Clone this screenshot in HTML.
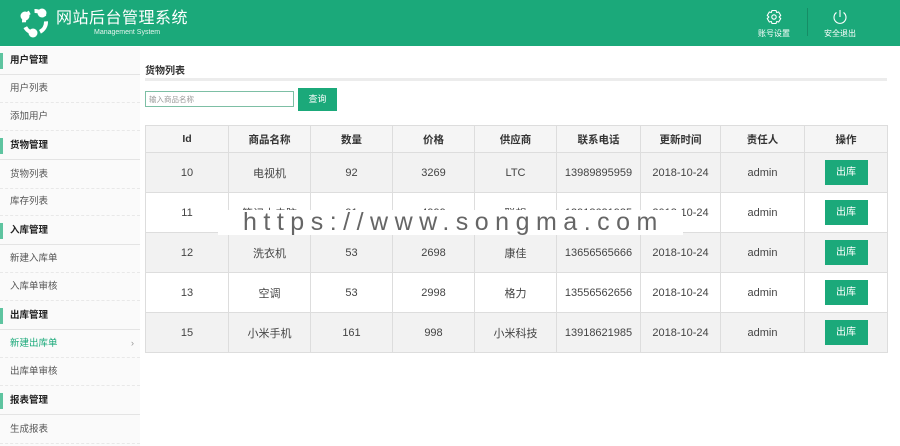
<!DOCTYPE html>
<html><head><meta charset="utf-8"><style>
*{margin:0;padding:0;box-sizing:border-box}
body{width:900px;height:446px;overflow:hidden;background:#fff;font-family:"Liberation Sans","Noto Sans CJK SC",sans-serif;position:relative;color:#333}
.hd{position:absolute;left:0;top:0;width:900px;height:46px;background:#1ba97a}
.t1{position:absolute;left:56px;top:8px;color:#fff;font-size:16px;line-height:22px;letter-spacing:0.5px}
.t2{position:absolute;left:94px;top:29px;color:#e6f5ef;font-size:7px;line-height:8px}
.hb{position:absolute;top:9px;color:#fff;font-size:8px;text-align:center;width:50px}
.sep{position:absolute;left:807px;top:8px;width:1px;height:28px;background:#168d66}
.sb{position:absolute;left:0;top:47px;width:140px;height:399px;background:#fafafa}
.it{position:absolute;left:0;width:140px;height:28px;line-height:28px;font-size:9.5px;padding-left:10px;color:#555;border-bottom:1px dashed #e8e8e8}
.it.h{font-weight:bold;color:#222;border-bottom:1px solid #e4e4e4}
.it.h:before{content:"";position:absolute;left:0;top:6px;width:3px;height:16px;background:#5ec4a0}
.ttl{position:absolute;left:145px;top:62px;font-size:10px;font-weight:bold;color:#333}
.ln{position:absolute;left:145px;top:78px;width:742px;height:3px;background:#ececec}
.inp{position:absolute;left:145px;top:91px;width:149px;height:16px;border:1px solid #7dbfa5;font-size:7.5px;color:#999;padding:3px 3px;line-height:9px}
.btn{position:absolute;left:298px;top:88px;width:39px;height:23px;background:#1ba97a;color:#fff;font-size:9px;text-align:center;line-height:23px}
table{position:absolute;left:145px;top:125px;border-collapse:collapse;font-size:11px;width:743px}
td,th{border:1px solid #ddd;text-align:center;color:#444;font-weight:normal}
th{height:27px;background:#f5f5f5;font-weight:bold;color:#333;font-size:10.5px}
td{height:40px}
tr.g td{background:#f2f2f2}
.ob{display:inline-block;width:43px;height:25px;line-height:25px;background:#1ba97a;color:#fff;font-size:10px}
.wm{position:absolute;left:218px;top:210px;width:465px;height:25px;background:#fff;color:#666;font-size:25px;letter-spacing:6.5px;line-height:25px;padding-left:25px;white-space:nowrap;overflow:hidden}
</style></head><body>
<div class="hd">
<svg style="position:absolute;left:18px;top:6px" width="36" height="34" viewBox="0 0 36 34"><circle cx="17" cy="16" r="11" fill="none" stroke="#fff" stroke-width="4" stroke-dasharray="12 5"/><circle cx="7" cy="10" r="4.5" fill="#fff"/><circle cx="24" cy="7" r="4.5" fill="#fff"/><circle cx="15" cy="27" r="4.5" fill="#fff"/></svg>
<div class="t1">网站后台管理系统</div><div class="t2">Management System</div>
<div class="hb" style="left:749px"><svg width="16" height="16" viewBox="0 0 16 16"><path d="M6 1.5h4l.7 2 2-.5 2 3.4-1.5 1.6 1.5 1.6-2 3.4-2-.5-.7 2H6l-.7-2-2 .5-2-3.4L2.8 8 1.3 6.4l2-3.4 2 .5z" fill="none" stroke="#fff" stroke-width="1.1"/><circle cx="8" cy="8" r="2.2" fill="none" stroke="#fff" stroke-width="1.1"/></svg><div style="margin-top:1px">账号设置</div></div>
<div class="sep"></div>
<div class="hb" style="left:815px"><svg width="16" height="16" viewBox="0 0 16 16"><path d="M4.5 3.5a6 6 0 1 0 7 0" fill="none" stroke="#fff" stroke-width="1.1"/><path d="M8 1v7" stroke="#fff" stroke-width="1.1"/></svg><div style="margin-top:1px">安全退出</div></div>
</div>
<div class="sb">
<div class="it h" style="top:0">用户管理</div>
<div class="it" style="top:28px">用户列表</div>
<div class="it" style="top:56px">添加用户</div>
<div class="it h" style="top:85px">货物管理</div>
<div class="it" style="top:114px">货物列表</div>
<div class="it" style="top:141px">库存列表</div>
<div class="it h" style="top:170px">入库管理</div>
<div class="it" style="top:198px">新建入库单</div>
<div class="it" style="top:226px">入库单审核</div>
<div class="it h" style="top:255px">出库管理</div>
<div class="it" style="top:283px;color:#1ba97a">新建出库单<span style="position:absolute;right:6px;color:#999">›</span></div>
<div class="it" style="top:311px">出库单审核</div>
<div class="it h" style="top:340px">报表管理</div>
<div class="it" style="top:369px">生成报表</div>
</div>
<div class="ttl">货物列表</div><div class="ln"></div>
<div class="inp">输入商品名称</div><div class="btn">查询</div>
<table>
<tr><th style="width:83px">Id</th><th style="width:82px">商品名称</th><th style="width:82px">数量</th><th style="width:82px">价格</th><th style="width:82px">供应商</th><th style="width:84px">联系电话</th><th style="width:80px">更新时间</th><th style="width:84px">责任人</th><th>操作</th></tr>
<tr class="g"><td>10</td><td>电视机</td><td>92</td><td>3269</td><td>LTC</td><td>13989895959</td><td>2018-10-24</td><td>admin</td><td><span class="ob">出库</span></td></tr>
<tr><td>11</td><td>笔记本电脑</td><td>91</td><td>4999</td><td>联想</td><td>13918621985</td><td>2018-10-24</td><td>admin</td><td><span class="ob">出库</span></td></tr>
<tr class="g"><td>12</td><td>洗衣机</td><td>53</td><td>2698</td><td>康佳</td><td>13656565666</td><td>2018-10-24</td><td>admin</td><td><span class="ob">出库</span></td></tr>
<tr><td>13</td><td>空调</td><td>53</td><td>2998</td><td>格力</td><td>13556562656</td><td>2018-10-24</td><td>admin</td><td><span class="ob">出库</span></td></tr>
<tr class="g"><td>15</td><td>小米手机</td><td>161</td><td>998</td><td>小米科技</td><td>13918621985</td><td>2018-10-24</td><td>admin</td><td><span class="ob">出库</span></td></tr>
</table>
<div class="wm">https://www.songma.com</div>
</body></html>
